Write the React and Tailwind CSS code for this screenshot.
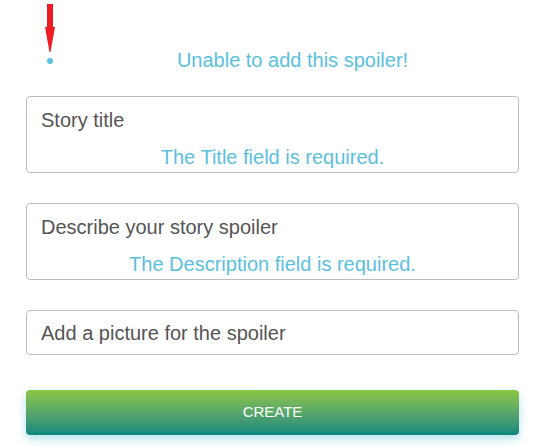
import React from 'react'

const font = { fontFamily: '"Liberation Sans", Arial, sans-serif' }

function Field({ label, error }) {
  return (
    <div className="border border-[#bdbdbd] rounded-[4px] bg-white">
      <div className={`px-[14px] flex items-center text-[20px] text-[#555] ${error ? 'h-[46px]' : 'h-[43px]'}`}>{label}</div>
      {error && (
        <div className="h-[29px] pb-[2px] flex items-center justify-center text-[20px] text-[#5bc0de]">{error}</div>
      )}
    </div>
  )
}

export default function App() {
  return (
    <div className="relative w-[546px] h-[447px] bg-white overflow-hidden" style={font}>
      {/* red annotation arrow */}
      <svg className="absolute left-0 top-0" width="60" height="60" viewBox="0 0 60 60">
        <rect x="47" y="4" width="6" height="24" fill="#ed1c24" />
        <polygon points="45,27 55,27 50.5,52 49.5,52" fill="#ed1c24" />
      </svg>

      <div className="pl-[26px] pr-[27px] pt-[46px]">
        <ul className="list-disc pl-[40px] text-[#5bc0de] text-[20px] leading-[28px]">
          <li className="text-center">Unable to add this spoiler!</li>
        </ul>

        <div className="mt-[22px] flex flex-col gap-[30px]">
          <Field label="Story title" error="The Title field is required." />
          <Field label="Describe your story spoiler" error="The Description field is required." />
          <Field label="Add a picture for the spoiler" />
        </div>

        <button className="mt-[35px] w-full h-[45px] rounded-[4px] text-white text-[15px] bg-gradient-to-b from-[#8dc63f] to-[#0b877f] shadow-[0_4px_10px_rgba(91,192,222,0.45)]">
          CREATE
        </button>
      </div>
    </div>
  )
}
